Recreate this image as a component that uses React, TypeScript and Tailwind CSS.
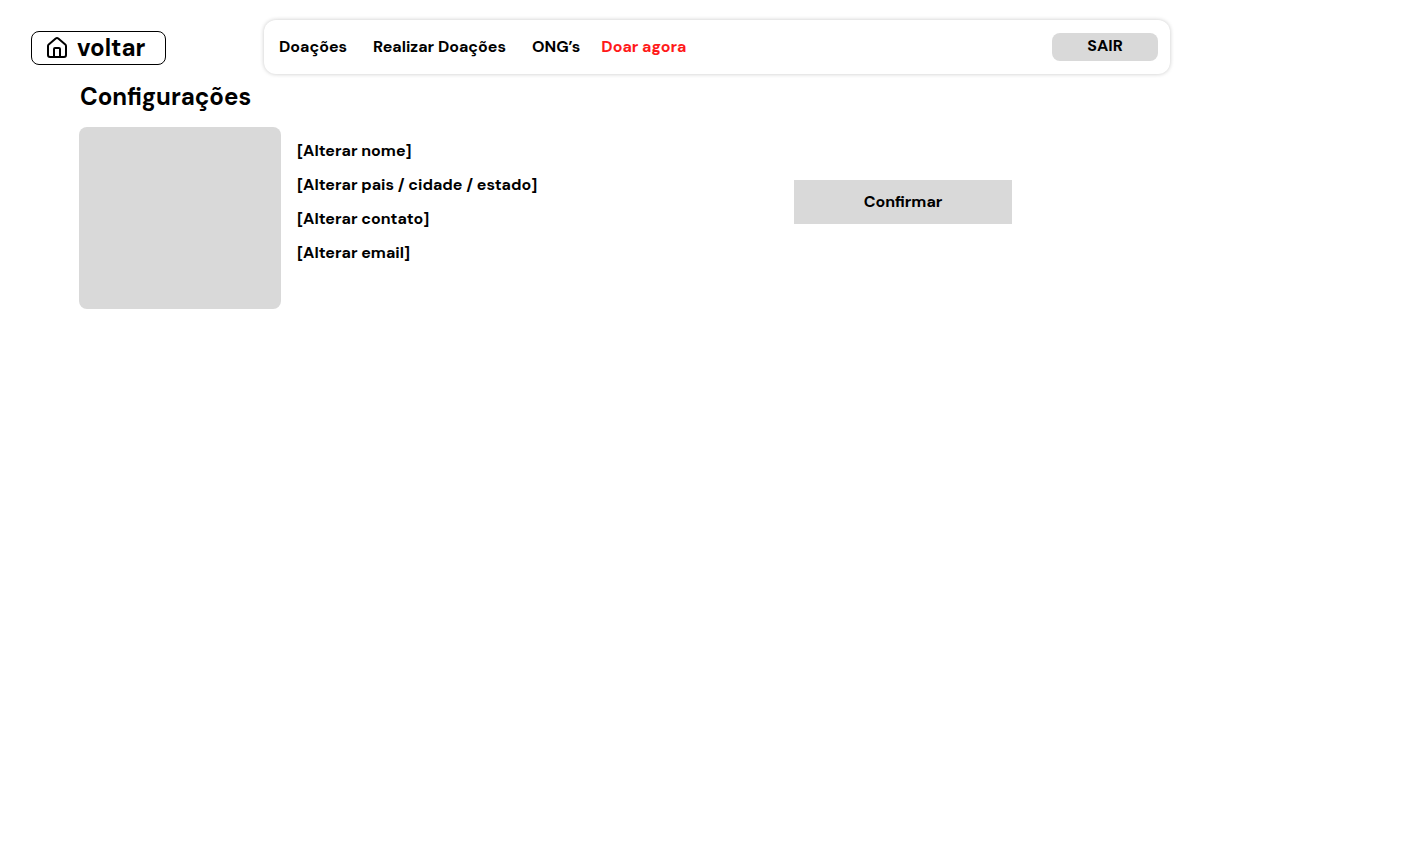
import { House } from "lucide-react";

const settings = [
  "[Alterar nome]",
  "[Alterar pais / cidade / estado]",
  "[Alterar contato]",
  "[Alterar email]",
];

export default function App() {
  return (
    <div className="min-h-screen bg-white font-['DM_Sans','Inter',sans-serif] text-base leading-5 font-bold text-black">
      <header className="flex items-center gap-[98px] pt-5 pr-8 pl-[31px]">
        <a
          href="#inicio"
          className="mt-0.5 flex h-[34px] w-[135px] shrink-0 items-center gap-2 rounded-lg border border-black px-[13px] text-2xl leading-8"
        >
          <House className="size-6 shrink-0" strokeWidth={2} aria-hidden="true" />
          voltar
        </a>
        <div className="flex h-[54px] max-w-[906px] flex-1 items-center justify-between rounded-xl pr-3 pl-[15px] shadow-[0_0_4px_0_rgba(0,0,0,0.22)]">
          <nav aria-label="Principal" className="flex items-center">
            <a href="#doacoes" className="mr-[26px]">
              Doações
            </a>
            <a href="#realizar" className="mr-[26px]">
              Realizar Doações
            </a>
            <a href="#ongs" className="mr-[21px]">
              ONG’s
            </a>
            <a href="#doar" className="text-[#ff1a1a]">
              Doar agora
            </a>
          </nav>
          <button
            type="button"
            className="h-7 w-[106px] rounded-lg bg-[#d9d9d9] pb-0.5"
          >
            SAIR
          </button>
        </div>
      </header>

      <main className="px-20 pt-[7px]">
        <h1 className="text-2xl leading-8">Configurações</h1>
        <div className="-ml-px mt-3.5 flex items-start">
          <div className="h-[182px] w-[202px] shrink-0 rounded-lg bg-[#d9d9d9]" />
          <div className="flex max-w-[513px] flex-1 flex-col items-start gap-3.5 pt-3.5 pl-4">
            {settings.map((label) => (
              <button key={label} type="button" className="text-left">
                {label}
              </button>
            ))}
          </div>
          <button
            type="button"
            className="mt-[53px] h-11 w-[218px] shrink-0 bg-[#d9d9d9]"
          >
            Confirmar
          </button>
        </div>
      </main>
    </div>
  );
}
